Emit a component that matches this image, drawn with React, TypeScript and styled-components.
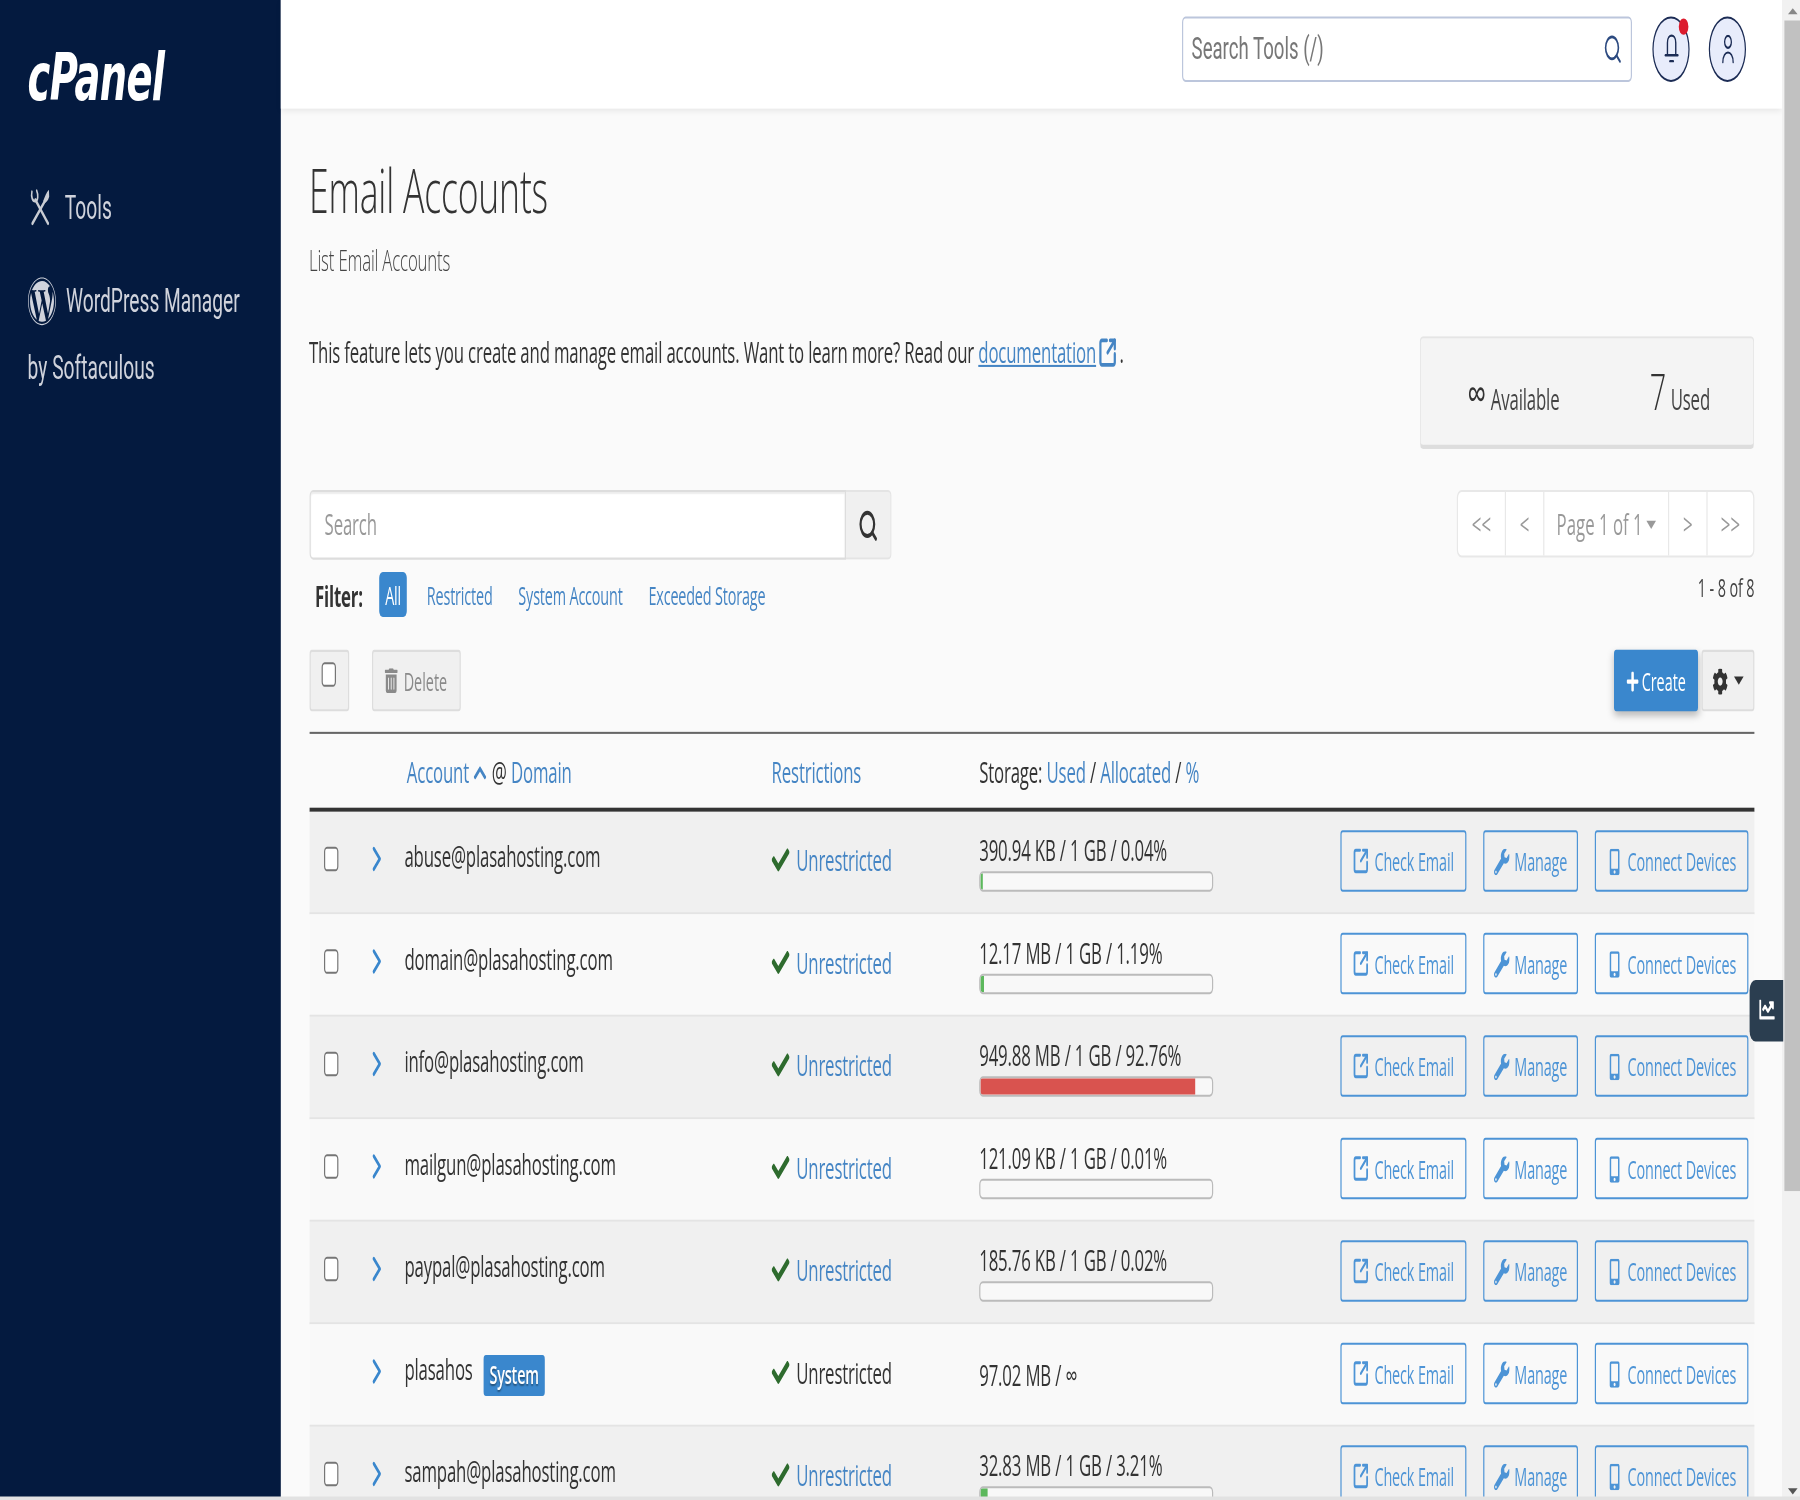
import React from "react";
import styled, { createGlobalStyle } from "styled-components";
import {
  FaCheck,
  FaChartLine,
  FaChevronUp,
  FaCog,
  FaMobileAlt,
  FaPlus,
  FaTrashAlt,
  FaWordpress,
  FaWrench,
} from "react-icons/fa";
import { ChevronRight, Search, SquareArrowOutUpRight } from "lucide-react";

const linkBlue = "#4585c4";
const buttonBlue = "#4d94d6";

// the reference is a 1500x732 page stretched to 1800x1500, so the stage is scaled the same way
const GlobalStyle = createGlobalStyle`
  html, body {
    margin: 0;
    padding: 0;
    width: 1800px;
    height: 1500px;
    overflow: hidden;
    background: #fafafa;
  }
  * { box-sizing: border-box; }
`;

const Stage = styled.div`
  position: relative;
  display: flex;
  width: 1500px;
  height: 732px;
  overflow: hidden;
  transform: scale(1.2, 2.05);
  transform-origin: 0 0;
  filter: blur(0.35px);
  font-family: "Open Sans", sans-serif;
  font-size: 14px;
  letter-spacing: -0.14px;
  color: #333;
  background: #fafafa;
`;

const Sidebar = styled.aside`
  flex: 0 0 234px;
  background: #041a3f;
  color: #d0d3dc;
  font-family: Roboto, sans-serif;
  font-size: 16px;
  letter-spacing: 0;
  padding: 0 23px;
`;

const Logo = styled.div`
  height: 85px;
  padding-top: 18px;
  font-family: "DejaVu Sans", sans-serif;
  font-weight: 700;
  font-style: italic;
  font-size: 32px;
  line-height: 40px;
  letter-spacing: -0.6px;
  color: #fff;
`;

const NavItem = styled.div`
  display: flex;
  align-items: center;
  gap: 12px;
  height: 32px;
  margin-bottom: 12.5px;
  margin-left: 2px;
`;

const NavWrapped = styled.div`
  line-height: 33px;
  svg {
    vertical-align: middle;
    margin-right: 8px;
  }
`;

const Main = styled.div`
  flex: 1;
  min-width: 0;
  display: flex;
  flex-direction: column;
`;

const TopBar = styled.header`
  flex: 0 0 53px;
  display: flex;
  align-items: center;
  justify-content: flex-end;
  gap: 16px;
  padding: 0 30px 6px 0;
  background: #fff;
  box-shadow: 0 1px 4px rgba(0, 0, 0, 0.08);
`;

const ToolSearch = styled.div`
  display: flex;
  align-items: center;
  justify-content: space-between;
  width: 375px;
  height: 32px;
  padding: 0 7px;
  margin-right: 1px;
  background: #fff;
  border: 1px solid #bcc6dc;
  border-radius: 3px;
  font-family: Roboto, sans-serif;
  font-size: 15.5px;
  letter-spacing: 0;
  color: #777;
  svg {
    color: #2c4a80;
  }
`;

const RoundButton = styled.div`
  position: relative;
  display: flex;
  align-items: center;
  justify-content: center;
  width: 31px;
  height: 32px;
  border-radius: 50%;
  border: 1px solid #1c2c55;
  background: #e8ecfb;
  color: #1c2c55;
`;

const RedDot = styled.span`
  position: absolute;
  top: 0;
  right: 0;
  width: 8px;
  height: 8px;
  border-radius: 50%;
  background: #dc1c2e;
`;

const Content = styled.main`
  flex: 1;
  padding: 0 23px 0 23.5px;
`;

const Title = styled.h1`
  margin: 20px 0 0;
  font-size: 29.6px;
  line-height: 40px;
  font-weight: 300;
  color: #333;
`;

const SubTitle = styled.div`
  margin-top: 4px;
  font-size: 14px;
  line-height: 20px;
  font-weight: 300;
  color: #444;
`;

const IntroRow = styled.div`
  display: flex;
  justify-content: space-between;
  margin-top: 25px;
`;

const Intro = styled.p`
  margin: 0;
  line-height: 20px;
  a {
    color: ${linkBlue};
    text-decoration: underline;
  }
  svg {
    vertical-align: -3px;
    margin: 0 -2px 0 2px;
  }
`;

const StatsBox = styled.div`
  display: flex;
  align-items: center;
  justify-content: space-between;
  width: 279px;
  height: 55px;
  margin-top: 2px;
  padding: 0 36px 0 39px;
  background: #f4f4f4;
  border: 1px solid #e5e5e5;
  border-bottom: 2px solid #ddd;
  border-radius: 3px;
  color: #444;
`;

const StatNum = styled.span<{ $big?: boolean }>`
  font-size: ${(p) => (p.$big ? "24px" : "22px")};
  line-height: 24px;
  font-weight: ${(p) => (p.$big ? 300 : 400)};
  margin-right: 4px;
  color: #333;
`;

const ListControls = styled.div`
  display: flex;
  justify-content: space-between;
  align-items: flex-start;
  margin-top: 20px;
`;

const SearchGroup = styled.div`
  display: flex;
  width: 485.5px;
  height: 34px;
`;

const SearchInput = styled.div`
  flex: 1;
  display: flex;
  align-items: center;
  padding: 0 12px 1px;
  background: #fff;
  border: 1px solid #ddd;
  border-radius: 3px 0 0 3px;
  box-shadow: inset 0 1px 1px rgba(0, 0, 0, 0.075);
  color: #999;
`;

const SearchAddon = styled.div`
  flex: 0 0 38px;
  display: flex;
  align-items: center;
  justify-content: center;
  background: #f0f0f0;
  border: 1px solid #e4e4e4;
  border-left: 0;
  border-radius: 0 3px 3px 0;
  color: #333;
`;

const Pager = styled.div`
  display: flex;
  height: 33px;
  background: #fff;
  border: 1px solid #e8e8e8;
  border-radius: 4px;
  color: #999;
  letter-spacing: 0;
`;

const PagerCell = styled.div<{ $w: number }>`
  flex: 0 0 ${(p) => p.$w}px;
  display: flex;
  align-items: center;
  justify-content: center;
  & + & {
    border-left: 1px solid #e8e8e8;
  }
`;

const Caret = styled.span`
  display: inline-block;
  margin-left: 3px;
  border-left: 4px solid transparent;
  border-right: 4px solid transparent;
  border-top: 4px solid currentColor;
`;

const FilterRow = styled.div`
  display: flex;
  justify-content: space-between;
  align-items: flex-start;
  margin-top: 6px;
`;

const Filters = styled.div`
  display: flex;
  align-items: center;
  height: 22px;
  font-size: 12px;
`;

const FilterLabel = styled.b`
  font-size: 14px;
  font-weight: 700;
  margin: 0 13.5px 0 5px;
`;

const FilterPill = styled.span<{ $on?: boolean }>`
  display: flex;
  align-items: center;
  height: 22px;
  padding: 0 5px;
  margin-right: 11.5px;
  border-radius: 3px;
  background: ${(p) => (p.$on ? "#3a87cd" : "transparent")};
  color: ${(p) => (p.$on ? "#fff" : linkBlue)};
`;

const Count = styled.div`
  font-size: 12px;
  line-height: 16px;
  letter-spacing: -0.1px;
  color: #444;
`;

const Toolbar = styled.div`
  display: flex;
  align-items: flex-start;
  margin-top: 16px;
  height: 41px;
  border-bottom: 1px solid #666;
`;

const GreyButton = styled.div<{ $w: number }>`
  display: flex;
  align-items: center;
  justify-content: center;
  gap: 4px;
  width: ${(p) => p.$w}px;
  height: 30px;
  margin-right: 19px;
  background: #f0f0f0;
  border: 1px solid #ddd;
  border-radius: 2px;
  font-size: 12px;
  letter-spacing: 0;
  color: #8a8a8a;
`;

const CheckAllButton = styled(GreyButton)`
  align-items: flex-start;
  padding-top: 5px;
`;

const CreateButton = styled.div`
  display: flex;
  align-items: center;
  justify-content: center;
  gap: 2px;
  width: 70px;
  height: 30px;
  margin-left: auto;
  margin-right: 3px;
  background: #3a87cd;
  border-radius: 2px;
  box-shadow: 0 2px 5px rgba(0, 0, 0, 0.25);
  color: #fff;
  font-size: 12px;
  letter-spacing: 0;
`;

const GearButton = styled.div`
  display: flex;
  align-items: center;
  justify-content: center;
  gap: 2px;
  width: 44px;
  height: 30px;
  background: #f0f0f0;
  border: 1px solid #ddd;
  border-radius: 2px;
  color: #333;
`;

const Box = styled.span`
  display: inline-block;
  width: 12px;
  height: 12px;
  background: #fff;
  border: 1px solid #767676;
  border-radius: 2.5px;
`;

const columns = "grid-template-columns: 79.5px 306px 173px 195px 1fr;";

const HeadRow = styled.div`
  display: grid;
  ${columns}
  align-items: center;
  height: 38px;
  white-space: nowrap;
  border-bottom: 2px solid #333;
  > :nth-child(1) {
    grid-column: 2;
    padding-left: 2px;
  }
  a {
    color: ${linkBlue};
  }
  svg {
    vertical-align: -1px;
  }
`;

const TableRow = styled.div<{ $odd: boolean }>`
  display: grid;
  ${columns}
  align-items: center;
  height: 50px;
  background: ${(p) => (p.$odd ? "#f0f0f0" : "#f9f9f9")};
  border-bottom: 1px solid #e4e4e4;
`;

const Lead = styled.div`
  display: flex;
  align-items: center;
  padding: 0 0 3px 12.5px;
  color: #3a87cd;
  ${Box} {
    margin-right: 21.5px;
  }
`;

const ExpandIcon = styled.span<{ $alone?: boolean }>`
  display: flex;
  margin-left: ${(p) => (p.$alone ? 33.5 : 0)}px;
`;

const Account = styled.div`
  padding-bottom: 6px;
  display: flex;
  align-items: center;
  gap: 9px;
`;

const SystemBadge = styled.span`
  padding: 0 5px;
  margin-top: 6px;
  height: 20px;
  line-height: 20px;
  background: #3a87cd;
  border-radius: 2px;
  color: #fff;
  font-size: 12px;
  font-weight: 600;
  text-shadow: 0 1px 1px rgba(0, 0, 0, 0.4);
`;

const Restriction = styled.div`
  display: flex;
  align-items: center;
  gap: 5.5px;
  padding-bottom: 2px;
  color: #333;
  svg {
    color: #2e6b2e;
  }
  a {
    color: ${linkBlue};
  }
`;

const Storage = styled.div`
  white-space: nowrap;
`;

const UsageText = styled.div`
  line-height: 18px;
`;

const UsageBar = styled.div`
  width: 195px;
  height: 10px;
  margin-top: 1px;
  overflow: hidden;
  background: #f8f8f8;
  border: 1px solid #bbb;
  border-radius: 3px;
`;

const UsageFill = styled.div<{ $danger: boolean }>`
  height: 100%;
  background: ${(p) => (p.$danger ? "#d9534f" : "#5cb85c")};
`;

const Actions = styled.div`
  display: flex;
  justify-content: flex-end;
  gap: 14px;
  padding: 0 5px 1px 0;
`;

const ActionButton = styled.div<{ $w: number }>`
  display: flex;
  align-items: center;
  justify-content: center;
  gap: 4px;
  width: ${(p) => p.$w}px;
  height: 30px;
  border: 1px solid ${buttonBlue};
  border-radius: 2px;
  font-size: 12px;
  letter-spacing: -0.1px;
  color: ${buttonBlue};
`;

const FloatTab = styled.div`
  position: absolute;
  right: 14px;
  top: 477.5px;
  display: flex;
  align-items: center;
  justify-content: center;
  width: 28px;
  height: 30px;
  background: #2b3e50;
  border-radius: 5px 0 0 5px;
  color: #fff;
`;

const ScrollTrack = styled.div`
  flex: 0 0 15px;
  display: flex;
  flex-direction: column;
  align-items: flex-end;
  background: #f1f1f1;
  color: #666;
`;

const ScrollArrow = styled.div<{ $up?: boolean }>`
  flex: 0 0 10px;
  display: flex;
  align-items: center;
  justify-content: center;
  width: 13px;
  &::before {
    content: "";
    border-left: 4px solid transparent;
    border-right: 4px solid transparent;
    ${(p) => (p.$up ? "border-bottom: 3px solid #888;" : "border-top: 3px solid #555;")}
  }
`;

const ScrollThumb = styled.div`
  flex: 0 0 571px;
  width: 13px;
  background: #c1c1c1;
`;

const ScrollRest = styled.div`
  flex: 1;
`;

const BottomScroll = styled.div`
  position: absolute;
  left: 0;
  right: 0;
  bottom: 0;
  height: 2px;
  background: #e2e2e2;
`;

const ToolsIcon = () => (
  <svg width="17" height="18" viewBox="0 0 17 18" fill="none" stroke="#c9ccd3" strokeWidth="1.7" strokeLinecap="round">
    <path d="M4.5 5.5 L15 17" />
    <path d="M1.6 1.5 C0.8 4 2 6.4 4.6 6.1 C6.8 5.8 7 3 5.6 1" strokeWidth="1.3" />
    <path d="M12.5 6 L2 17" />
    <path d="M15.8 0.6 L16 4 C15 6 13.5 7 12 7 L11 6 C12.5 4 13.5 2 15.8 0.6 Z" fill="#c9ccd3" stroke="none" />
  </svg>
);

const BellIcon = () => (
  <svg width="14" height="15" viewBox="0 0 12 13" fill="none" stroke="#1c2c55" strokeWidth="1" strokeLinecap="round">
    <path d="M3 9 V4.2 C3 0.2 9 0.2 9 4.2 V9" />
    <path d="M1.5 9.5 H10.5" />
    <path d="M4.8 12 H7.2" />
  </svg>
);

const PersonIcon = () => (
  <svg width="12" height="14" viewBox="0 0 10 13" fill="none" stroke="#1c2c55" strokeWidth="1" strokeLinecap="round">
    <ellipse cx="5" cy="3.2" rx="2.6" ry="2.7" />
    <path d="M1 12.5 C1 6.5 9 6.5 9 12.5" />
  </svg>
);

type EmailAccount = { email: string; usage: string; pct: number; fill: number };

const accounts: EmailAccount[] = [
  { email: "abuse@plasahosting.com", usage: "390.94 KB / 1 GB / 0.04%", pct: 0.04, fill: 1 },
  { email: "domain@plasahosting.com", usage: "12.17 MB / 1 GB / 1.19%", pct: 1.19, fill: 1.5 },
  { email: "info@plasahosting.com", usage: "949.88 MB / 1 GB / 92.76%", pct: 92.76, fill: 92.76 },
  { email: "mailgun@plasahosting.com", usage: "121.09 KB / 1 GB / 0.01%", pct: 0.01, fill: 0 },
  { email: "paypal@plasahosting.com", usage: "185.76 KB / 1 GB / 0.02%", pct: 0.02, fill: 0 },
  { email: "plasahos", usage: "97.02 MB / ∞", pct: -1, fill: 0 },
  { email: "sampah@plasahosting.com", usage: "32.83 MB / 1 GB / 3.21%", pct: 3.21, fill: 3.21 },
];

const RowActions = () => (
  <Actions>
    <ActionButton $w={105}>
      <SquareArrowOutUpRight size={14} strokeWidth={2.5} />
      Check Email
    </ActionButton>
    <ActionButton $w={79}>
      <FaWrench size={13} />
      Manage
    </ActionButton>
    <ActionButton $w={128}>
      <FaMobileAlt size={13} />
      Connect Devices
    </ActionButton>
  </Actions>
);

export default function App() {
  return (
    <>
      <GlobalStyle />
      <Stage>
        <Sidebar>
          <Logo>cPanel</Logo>
          <NavItem>
            <ToolsIcon />
            Tools
          </NavItem>
          <NavWrapped>
            <FaWordpress size={24} />
            WordPress Manager by Softaculous
          </NavWrapped>
        </Sidebar>
        <Main>
          <TopBar>
            <ToolSearch>
              Search Tools (/)
              <Search size={16} />
            </ToolSearch>
            <RoundButton>
              <BellIcon />
              <RedDot />
            </RoundButton>
            <RoundButton>
              <PersonIcon />
            </RoundButton>
          </TopBar>
          <Content>
            <Title>Email Accounts</Title>
            <SubTitle>List Email Accounts</SubTitle>
            <IntroRow>
              <Intro>
                This feature lets you create and manage email accounts. Want to learn more? Read our{" "}
                <a>documentation</a>
                <SquareArrowOutUpRight size={16} strokeWidth={2.8} color={linkBlue} /> .
              </Intro>
              <StatsBox>
                <span>
                  <StatNum>∞</StatNum>Available
                </span>
                <span>
                  <StatNum $big>7</StatNum>Used
                </span>
              </StatsBox>
            </IntroRow>
            <ListControls>
              <SearchGroup>
                <SearchInput>Search</SearchInput>
                <SearchAddon>
                  <Search size={17} strokeWidth={2.6} />
                </SearchAddon>
              </SearchGroup>
              <Pager>
                <PagerCell $w={39}>&lt;&lt;</PagerCell>
                <PagerCell $w={32}>&lt;</PagerCell>
                <PagerCell $w={104}>
                  Page 1 of 1<Caret />
                </PagerCell>
                <PagerCell $w={32}>&gt;</PagerCell>
                <PagerCell $w={39}>&gt;&gt;</PagerCell>
              </Pager>
            </ListControls>
            <FilterRow>
              <Filters>
                <FilterLabel>Filter:</FilterLabel>
                <FilterPill $on>All</FilterPill>
                <FilterPill>Restricted</FilterPill>
                <FilterPill>System Account</FilterPill>
                <FilterPill>Exceeded Storage</FilterPill>
              </Filters>
              <Count>1 - 8 of 8</Count>
            </FilterRow>
            <Toolbar>
              <CheckAllButton $w={33}>
                <Box />
              </CheckAllButton>
              <GreyButton $w={74}>
                <FaTrashAlt size={12} />
                Delete
              </GreyButton>
              <CreateButton>
                <FaPlus size={11} />
                Create
              </CreateButton>
              <GearButton>
                <FaCog size={13} />
                <Caret />
              </GearButton>
            </Toolbar>
            <HeadRow>
              <div>
                <a>Account</a> <FaChevronUp size={12} color={linkBlue} /> @ <a>Domain</a>
              </div>
              <div>
                <a>Restrictions</a>
              </div>
              <div>
                Storage: <a>Used</a> / <a>Allocated</a> / <a>%</a>
              </div>
            </HeadRow>
            {accounts.map((acc, i) => {
              const system = acc.pct < 0;
              return (
                <TableRow key={acc.email} $odd={i % 2 === 0}>
                  <Lead>
                    {!system && <Box />}
                    <ExpandIcon $alone={system}>
                      <ChevronRight size={20} strokeWidth={2.2} />
                    </ExpandIcon>
                  </Lead>
                  <Account>
                    {acc.email}
                    {system && <SystemBadge>System</SystemBadge>}
                  </Account>
                  <Restriction>
                    <FaCheck size={15} />
                    {system ? "Unrestricted" : <a>Unrestricted</a>}
                  </Restriction>
                  <Storage>
                    <UsageText>{acc.usage}</UsageText>
                    {!system && (
                      <UsageBar>
                        <UsageFill $danger={acc.pct > 90} style={{ width: `${acc.fill}%` }} />
                      </UsageBar>
                    )}
                  </Storage>
                  <RowActions />
                </TableRow>
              );
            })}
          </Content>
        </Main>
        <ScrollTrack>
          <ScrollArrow $up />
          <ScrollThumb />
          <ScrollRest />
          <ScrollArrow />
        </ScrollTrack>
        <FloatTab>
          <FaChartLine size={13} />
        </FloatTab>
        <BottomScroll />
      </Stage>
    </>
  );
}
